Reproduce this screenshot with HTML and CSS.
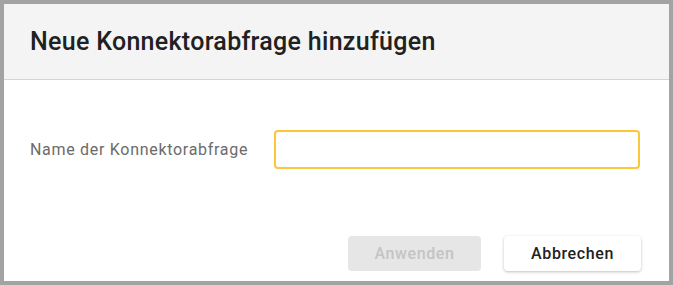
FILE: index.html
```html
<!DOCTYPE html>
<html lang="de">
<head>
    <meta charset="UTF-8">
    <meta name="viewport" content="width=device-width, initial-scale=1.0">
    <title>Neue Konnektorabfrage hinzufügen</title>
    <link rel="stylesheet" href="styles.css">
</head>
<body>
    <div class="dialog">
        <header class="dialog-header">
            <h1>Neue Konnektorabfrage hinzufügen</h1>
        </header>
        <div class="dialog-body">
            <div class="field">
                <label for="queryName">Name der Konnektorabfrage</label>
                <input type="text" id="queryName" name="queryName">
            </div>
        </div>
        <footer class="dialog-footer">
            <button type="button" class="btn btn-apply" disabled>Anwenden</button>
            <button type="button" class="btn btn-cancel">Abbrechen</button>
        </footer>
    </div>
</body>
</html>
```

FILE: styles.css
```css
html, body {
    margin: 0;
    padding: 0;
}
body {
    font-family: Roboto, "Liberation Sans", sans-serif;
    background-color: #a3a3a3;
}
.dialog {
    box-sizing: border-box;
    width: 673px;
    height: 285px;
    border: 4px solid #a3a3a3;
    background-color: #ffffff;
    display: flex;
    flex-direction: column;
}
.dialog-header {
    height: 75px;
    background-color: #f4f4f4;
    border-bottom: 1px solid #d4d4d4;
    display: flex;
    align-items: center;
    padding-left: 26px;
}
.dialog-header h1 {
    margin: 0;
    font-size: 25px;
    font-weight: 500;
    letter-spacing: 0.3px;
    color: #212121;
}
.dialog-body {
    padding: 50px 28px 0 26px;
}
.field {
    display: flex;
    align-items: center;
}
.field label {
    width: 244px;
    font-size: 16px;
    color: #6b6b6b;
    letter-spacing: 0.7px;
}
.field input {
    box-sizing: border-box;
    width: 366px;
    height: 39px;
    border: 2px solid #fcc63a;
    border-radius: 4px;
    outline: none;
    padding: 0 10px;
    font-family: inherit;
    font-size: 16px;
}
.dialog-footer {
    margin-top: auto;
    display: flex;
    justify-content: flex-end;
    gap: 23px;
    padding: 0 28px 10px 0;
}
.btn {
    height: 35px;
    border-radius: 4px;
    border: none;
    font-family: inherit;
    font-size: 16px;
    font-weight: 500;
    letter-spacing: 0.6px;
}
.btn-apply {
    width: 133px;
    background-color: #e6e6e6;
    color: #c4c4c4;
}
.btn-cancel {
    width: 137px;
    background-color: #ffffff;
    color: #222222;
    box-shadow: 0 1px 3px rgba(0, 0, 0, 0.25);
    cursor: pointer;
}
```
